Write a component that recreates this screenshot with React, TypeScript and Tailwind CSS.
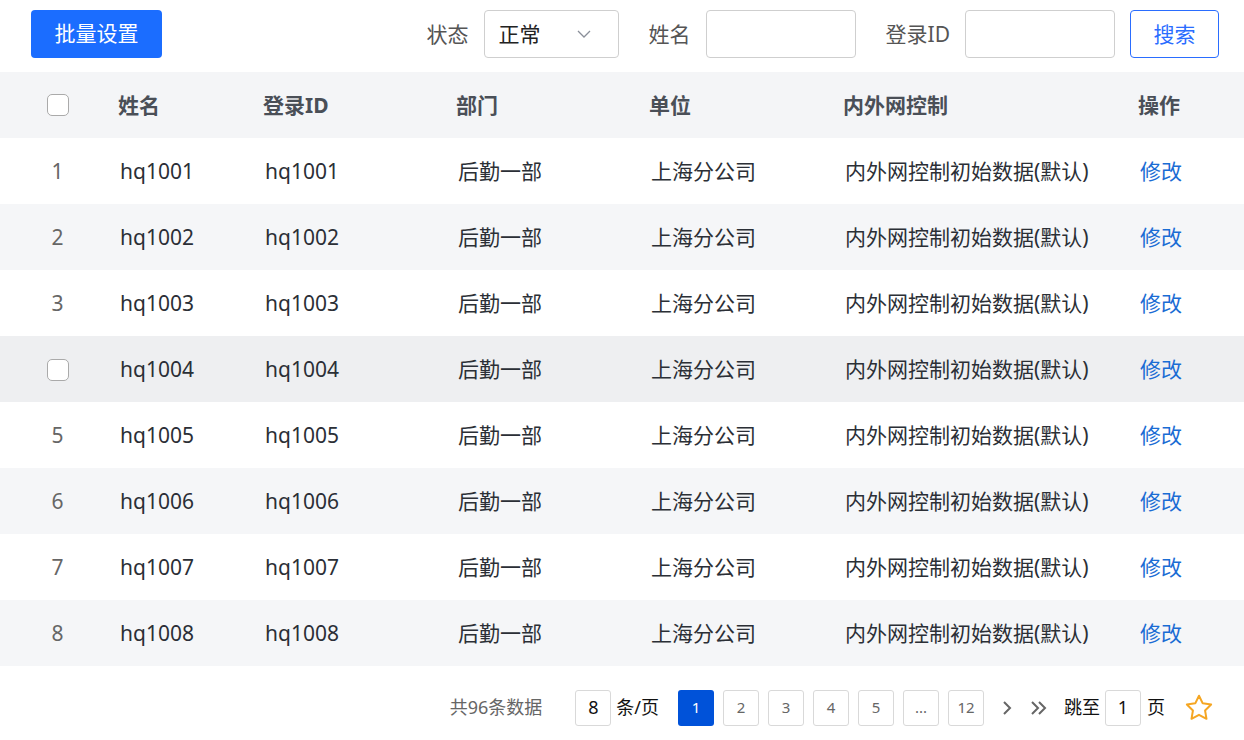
import { useState } from 'react';

const rows = Array.from({ length: 8 }, (_, i) => ({
  no: i + 1,
  name: `hq100${i + 1}`,
  loginId: `hq100${i + 1}`,
  dept: '后勤一部',
  unit: '上海分公司',
  net: '内外网控制初始数据(默认)',
}));

const cols = 'grid grid-cols-[116px_145px_193px_193px_194px_295px_1fr] items-center';

function Checkbox() {
  return <span className="inline-block w-[22px] h-[22px] rounded-[5px] border border-[#aaaaaa] bg-white" />;
}

function Chevron() {
  return (
    <svg width="16" height="10" viewBox="0 0 16 10" fill="none">
      <path d="M2 2l6 6 6-6" stroke="#8a8f99" strokeWidth="1.3" />
    </svg>
  );
}

function Toolbar() {
  return (
    <div className="h-[72px] flex items-start pt-[10px] pl-[31px] pr-[25px]">
      <button className="h-[48px] w-[131px] rounded-[4px] bg-[#1b6dff] text-white text-[21px]">批量设置</button>
      <div className="ml-auto flex items-center gap-[15px] text-[21px] text-[#555]">
        <span className="pt-[2px]">状态</span>
        <div className="h-[48px] w-[135px] rounded-[4px] border border-[#cfcfcf] flex items-center pl-[14px] pr-[26px] text-[#222]">
          <span className="pt-[2px]">正常</span>
          <span className="ml-auto">
            <Chevron />
          </span>
        </div>
        <span className="ml-[15px] pt-[2px]">姓名</span>
        <div className="h-[48px] w-[150px] rounded-[4px] border border-[#cfcfcf]" />
        <span className="ml-[15px] pt-[2px]">登录ID</span>
        <div className="h-[48px] w-[150px] rounded-[4px] border border-[#cfcfcf]" />
        <button className="h-[48px] w-[89px] rounded-[4px] border border-[#2a6dff] text-[#2a6dff] text-[21px] pt-[2px]">搜索</button>
      </div>
    </div>
  );
}

function Table() {
  const [hover] = useState(4);
  return (
    <div>
      <div className={`${cols} h-[66px] pt-[2px] bg-[#f4f5f7] text-[21px] font-bold text-[#4a4f57]`}>
        <div className="flex justify-center -mt-[2px]">
          <Checkbox />
        </div>
        <div className="pl-[2px]">姓名</div>
        <div className="pl-[2px]">登录ID</div>
        <div className="pl-[2px]">部门</div>
        <div className="pl-[2px]">单位</div>
        <div className="pl-[2px]">内外网控制</div>
        <div className="pl-[2px]">操作</div>
      </div>
      {rows.map((r) => (
        <div
          key={r.no}
          className={`${cols} h-[66px] pt-[2px] text-[21px] text-[#2b2f36] ${
            r.no === hover ? 'bg-[#eeeff1]' : r.no % 2 === 0 ? 'bg-[#f5f6f8]' : 'bg-white'
          }`}
        >
          <div className="flex justify-center text-[#666] pr-[1px]">{r.no === hover ? <Checkbox /> : r.no}</div>
          <div className="pl-[4px]">{r.name}</div>
          <div className="pl-[4px]">{r.loginId}</div>
          <div className="pl-[4px]">{r.dept}</div>
          <div className="pl-[4px]">{r.unit}</div>
          <div className="pl-[4px]">{r.net}</div>
          <div className="pl-[4px] text-[#1a6cd4]">修改</div>
        </div>
      ))}
    </div>
  );
}

function Pager() {
  const pages = ['1', '2', '3', '4', '5', '...', '12'];
  return (
    <div className="h-[74px] pt-[9px] flex items-center justify-end pr-[29px] text-[18px]">
      <span className="text-[#666] mr-[33px]">共96条数据</span>
      <div className="w-[36px] h-[36px] border border-[#d9d9d9] rounded-[3px] flex items-center justify-center text-[#111]">8</div>
      <span className="ml-[5px] mr-[19px] text-[#111]">条/页</span>
      <div className="flex gap-[9px]">
        {pages.map((p) => (
          <div
            key={p}
            className={`w-[36px] h-[36px] rounded-[3px] flex items-center justify-center text-[15px] ${
              p === '1' ? 'bg-[#0052d9] text-white' : 'border border-[#d9d9d9] text-[#666]'
            }`}
          >
            {p}
          </div>
        ))}
      </div>
      <svg className="ml-[18px]" width="10" height="16" viewBox="0 0 10 16" fill="none">
        <path d="M2 2l6 6-6 6" stroke="#666" strokeWidth="2" />
      </svg>
      <svg className="ml-[18px]" width="17" height="16" viewBox="0 0 17 16" fill="none">
        <path d="M2 2l6 6-6 6M9 2l6 6-6 6" stroke="#666" strokeWidth="2" />
      </svg>
      <span className="ml-[17px] text-[#111]">跳至</span>
      <div className="ml-[5px] w-[36px] h-[36px] border border-[#d9d9d9] rounded-[3px] flex items-center justify-center text-[#111]">1</div>
      <span className="ml-[6px] text-[#111]">页</span>
      <svg className="ml-[18px]" width="32" height="32" viewBox="0 0 24 24" fill="none">
        <path
          d="M12 2.8l2.8 5.7 6.3.9-4.55 4.45 1.07 6.27L12 17.15l-5.62 2.97 1.07-6.27L2.9 9.4l6.3-.9z"
          stroke="#f5a623"
          strokeWidth="1.5"
          strokeLinejoin="round"
        />
      </svg>
    </div>
  );
}

export default function App() {
  return (
    <div className="w-[1244px] h-[740px] bg-white overflow-hidden font-['Noto_Sans','Noto_Sans_CJK_SC',sans-serif]">
      <Toolbar />
      <Table />
      <Pager />
    </div>
  );
}
